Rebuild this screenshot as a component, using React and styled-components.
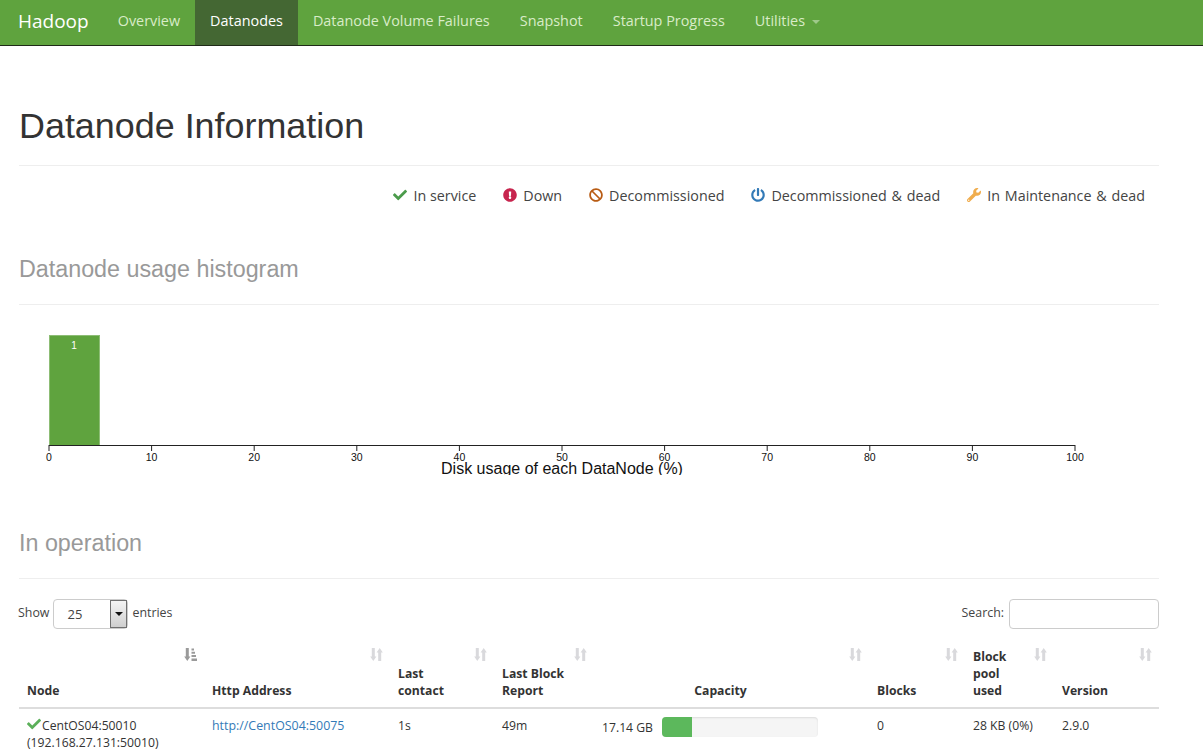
import React from 'react'
import styled, { createGlobalStyle } from 'styled-components'
import { FaCheck, FaExclamationCircle, FaBan, FaPowerOff, FaWrench } from 'react-icons/fa'

const Global = createGlobalStyle`
  html, body { margin: 0; height: 100%; overflow: hidden; background: #fff; }
  body { font-family: "Open Sans", "Liberation Sans", Arial, sans-serif; font-size: 14px; color: #333; }
  * { box-sizing: border-box; }
`

const Navbar = styled.nav`
  display: flex;
  height: 46px;
  padding-left: 3px;
  background: #5fa33e;
  border-bottom: 1px solid #1f2a18;
`
const Brand = styled.a`
  padding: 0 14px 0 15px;
  line-height: 43px;
  font-size: 19px;
  color: #fff;
`
const NavItem = styled.a`
  display: flex;
  align-items: center;
  gap: 7px;
  padding: 0 15px 4px;
  height: 45px;
  font-size: 14.4px;
  color: ${p => (p.$active ? '#fff' : '#d9ecc8')};
  background: ${p => (p.$active ? '#446733' : 'transparent')};
`
const Caret = styled.span`
  width: 0;
  height: 0;
  margin-top: 2px;
  border-top: 4px solid #9fc98a;
  border-left: 4px solid transparent;
  border-right: 4px solid transparent;
`
const Container = styled.main`
  width: 1140px;
  margin-left: 19px;
`
const PageHeader = styled.div`
  padding-top: 55px;
  padding-bottom: 14px;
  border-bottom: 1px solid #eee;
`
const Title = styled.h1`
  margin: 0;
  font-family: "Liberation Sans", Arial, sans-serif;
  font-size: 35.9px;
  font-weight: 400;
  line-height: 50px;
  color: #333;
`
const Legend = styled.ul`
  display: flex;
  justify-content: flex-end;
  gap: 27px;
  margin: 0;
  padding: 19px 14px 0 0;
  list-style: none;
  height: 60px;
`
const LegendItem = styled.li`
  display: flex;
  align-items: center;
  gap: 6px;
  height: 20px;
  font-size: 14.3px;
  word-spacing: ${p => (p.$wide ? 1.1 : 0)}px;
  color: #444;
  svg { color: ${p => p.$color}; font-size: 14px; }
`
const Section = styled.div`
  padding-bottom: 18px;
  border-bottom: 1px solid #eee;
  margin-top: ${p => p.$top || 0}px;
`
const SectionTitle = styled.h2`
  margin: 0;
  font-family: "Liberation Sans", Arial, sans-serif;
  font-size: 23.3px;
  font-weight: 400;
  line-height: 33px;
  color: #999;
`
const Chart = styled.svg`
  display: block;
  margin: 30px 0 0 -19px;
  font-family: "Liberation Sans", Arial, sans-serif;
`
const Controls = styled.div`
  display: flex;
  justify-content: space-between;
  align-items: flex-start;
  margin-top: 20px;
  font-size: 12.4px;
  line-height: 28px;
  color: #444;
`
const Field = styled.label`
  display: flex;
  align-items: flex-start;
  gap: 4px;
  margin-left: -1px;
`
const FakeSelect = styled.div`
  display: flex;
  justify-content: space-between;
  width: 75px;
  height: 30px;
  border: 1px solid #ccc;
  border-radius: 4px;
  background: #fff;
  font-size: 13px;
  line-height: 28px;
  padding-left: 13px;
`
const SelectButton = styled.span`
  display: flex;
  align-items: center;
  justify-content: center;
  width: 17px;
  height: 28px;
  border: 1px solid #707070;
  background: linear-gradient(#f4f4f4, #cfcfcf);
`
const SelectArrow = styled.i`
  border-top: 4px solid #111;
  border-left: 4px solid transparent;
  border-right: 4px solid transparent;
`
const SearchBox = styled.input`
  width: 150px;
  height: 30px;
  margin-left: 1px;
  border: 1px solid #ccc;
  border-radius: 4px;
`
const Table = styled.table`
  width: 1140px;
  margin-top: 9px;
  border-collapse: collapse;
  table-layout: fixed;
  font-size: 12.2px;
`
const Th = styled.th`
  position: relative;
  padding: 8px;
  padding-right: ${p => (p.$align ? 30 : 8)}px;
  height: 70px;
  text-align: ${p => p.$align || 'left'};
  vertical-align: bottom;
  line-height: 17px;
  font-size: 12.2px;
  font-weight: 700;
  border-bottom: 2px solid #ddd;
`
const Td = styled.td`
  padding: 8px;
  vertical-align: top;
  line-height: 17px;
  color: #333;
`
const SortMark = styled.svg`
  position: absolute;
  top: 10px;
  right: 7px;
  color: ${p => (p.$sorted ? '#9a9a9a' : '#d9d9dc')};
`
const NodeCheck = styled(FaCheck)`
  color: #5cb05a;
  font-size: 14px;
  margin-right: 1px;
  vertical-align: -1px;
`
const Link = styled.a`
  color: #337ab7;
  font-size: 12.4px;
`
const CapacityCell = styled.div`
  display: flex;
  align-items: center;
  gap: 9px;
`
const Progress = styled.div`
  width: 156px;
  height: 20px;
  border-radius: 4px;
  background: #f5f5f5;
  overflow: hidden;
  box-shadow: inset 0 1px 2px rgba(0, 0, 0, 0.1);
`
const ProgressBar = styled.div`
  height: 100%;
  background: #5cb85c;
`

const navItems = ['Overview', 'Datanodes', 'Datanode Volume Failures', 'Snapshot', 'Startup Progress']

const legend = [
  { label: 'In service', color: '#4b9b4b', icon: FaCheck },
  { label: 'Down', color: '#c7254e', icon: FaExclamationCircle },
  { label: 'Decommissioned', color: '#b85c14', icon: FaBan },
  { label: 'Decommissioned & dead', color: '#337ab7', icon: FaPowerOff, wide: true },
  { label: 'In Maintenance & dead', color: '#f0ad4e', icon: FaWrench, wide: true },
]

const columns = [
  { key: 'node', width: 185, label: 'Node', sorted: true },
  { key: 'http', width: 186, label: 'Http Address' },
  { key: 'contact', width: 104, label: <>Last<br />contact</> },
  { key: 'report', width: 100, label: <>Last Block<br />Report</> },
  { key: 'capacity', width: 275, label: 'Capacity', align: 'center' },
  { key: 'blocks', width: 96, label: 'Blocks' },
  { key: 'pool', width: 89, label: <>Block<br />pool<br />used</> },
  { key: 'version', width: 105, label: 'Version' },
]

const ticks = [0, 10, 20, 30, 40, 50, 60, 70, 80, 90, 100]

function SortIcon({ sorted }) {
  return (
    <SortMark $sorted={sorted} width="13" height="13" viewBox="0 0 13 13" fill="currentColor">
      <path d="M1.8 0h3v8.5h1.6L3.3 13 0.2 8.5h1.6z" />
      {sorted ? (
        <path d="M7.5 0.5h2.5v2H7.5zM7.5 3.7h3.5v2H7.5zM7.5 6.9h4.5v2H7.5zM7.5 10.5h5.5v2.5H7.5z" />
      ) : (
        <path d="M8.2 13h3V4.5h1.6L9.7 0 6.6 4.5h1.6z" />
      )}
    </SortMark>
  )
}

function Histogram() {
  const x = v => 49 + v * 10.26
  return (
    <Chart width="1159" height="140">
      <rect x="49.5" y="0.5" width="50" height="110" fill="#5fa33e" stroke="#8dbd75" />
      <text x="74" y="14" textAnchor="middle" fontSize="10" fill="#fff">1</text>
      <line x1="49" x2="1075" y1="110.5" y2="110.5" stroke="#222" />
      {ticks.map(t => (
        <g key={t}>
          <line x1={x(t)} x2={x(t)} y1="110" y2="116" stroke="#222" />
          <text x={x(t)} y="126" textAnchor="middle" fontSize="10.5" fill="#111">{t}</text>
        </g>
      ))}
      <text x="562" y="139" textAnchor="middle" fontSize="16" fill="#111">Disk usage of each DataNode (%)</text>
    </Chart>
  )
}

export default function App() {
  return (
    <>
      <Global />
      <Navbar>
        <Brand>Hadoop</Brand>
        {navItems.map(item => (
          <NavItem key={item} $active={item === 'Datanodes'}>{item}</NavItem>
        ))}
        <NavItem>Utilities <Caret /></NavItem>
      </Navbar>
      <Container>
        <PageHeader>
          <Title>Datanode Information</Title>
        </PageHeader>
        <Legend>
          {legend.map(({ label, color, icon: Icon, wide }) => (
            <LegendItem key={label} $color={color} $wide={wide}><Icon />{label}</LegendItem>
          ))}
        </Legend>
        <Section $top={27}>
          <SectionTitle>Datanode usage histogram</SectionTitle>
        </Section>
        <Histogram />
        <Section $top={52}>
          <SectionTitle>In operation</SectionTitle>
        </Section>
        <Controls>
          <Field>Show <FakeSelect>25<SelectButton><SelectArrow /></SelectButton></FakeSelect> entries</Field>
          <Field>Search: <SearchBox /></Field>
        </Controls>
        <Table>
          <colgroup>
            {columns.map(c => <col key={c.key} width={c.width} />)}
          </colgroup>
          <thead>
            <tr>
              {columns.map(c => (
                <Th key={c.key} $align={c.align}>
                  {c.label}
                  <SortIcon sorted={c.sorted} />
                </Th>
              ))}
            </tr>
          </thead>
          <tbody>
            <tr>
              <Td><NodeCheck />CentOS04:50010<br />(192.168.27.131:50010)</Td>
              <Td><Link>http://CentOS04:50075</Link></Td>
              <Td>1s</Td>
              <Td>49m</Td>
              <Td>
                <CapacityCell>
                  17.14 GB
                  <Progress><ProgressBar style={{ width: `${(30 / 156) * 100}%` }} /></Progress>
                </CapacityCell>
              </Td>
              <Td>0</Td>
              <Td>28 KB (0%)</Td>
              <Td>2.9.0</Td>
            </tr>
          </tbody>
        </Table>
      </Container>
    </>
  )
}
